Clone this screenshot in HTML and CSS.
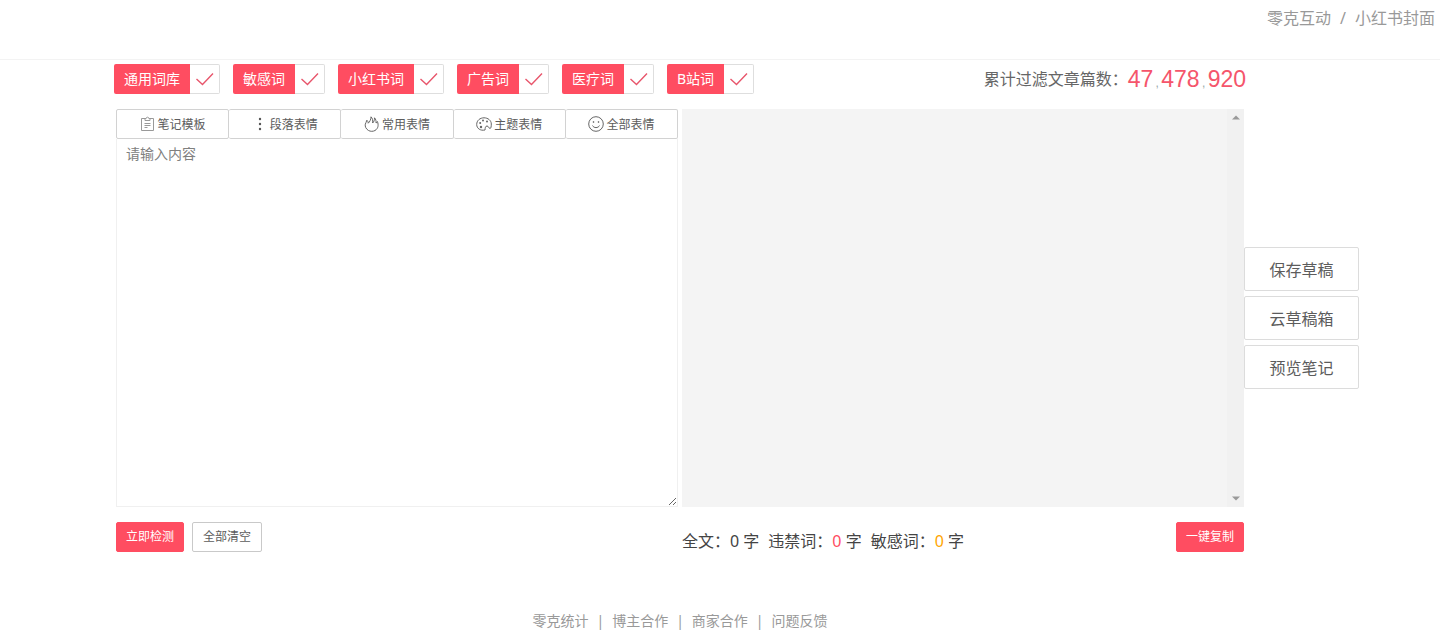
FILE: index.html
```html
<!DOCTYPE html>
<html lang="zh-CN">
<head>
<meta charset="utf-8">
<title>零克互动</title>
<link rel="stylesheet" href="styles.css">
</head>
<body>
<svg class="defs" aria-hidden="true">
  <symbol id="tick" viewBox="0 0 20 16"><path d="M1.5 8 7.5 13.5 18 2.5" fill="none" stroke="currentColor" stroke-width="1.4"/></symbol>
</svg>
<header class="header">
  <nav class="topnav"><a href="#">零克互动</a><span>/</span><a href="#">小红书封面</a></nav>
</header>
<div class="page">
  <main class="content">
    <div class="filters">
      <div class="tags">
        <label class="tag"><span class="tag-name">通用词库</span><span class="tag-box"><input type="checkbox" checked><svg class="tick"><use href="#tick"/></svg></span></label>
        <label class="tag"><span class="tag-name">敏感词</span><span class="tag-box"><input type="checkbox" checked><svg class="tick"><use href="#tick"/></svg></span></label>
        <label class="tag"><span class="tag-name">小红书词</span><span class="tag-box"><input type="checkbox" checked><svg class="tick"><use href="#tick"/></svg></span></label>
        <label class="tag"><span class="tag-name">广告词</span><span class="tag-box"><input type="checkbox" checked><svg class="tick"><use href="#tick"/></svg></span></label>
        <label class="tag"><span class="tag-name">医疗词</span><span class="tag-box"><input type="checkbox" checked><svg class="tick"><use href="#tick"/></svg></span></label>
        <label class="tag"><span class="tag-name">B站词</span><span class="tag-box"><input type="checkbox" checked><svg class="tick"><use href="#tick"/></svg></span></label>
      </div>
      <div class="total"><span>累计过滤文章篇数：</span><span class="odometer"><span>47</span><i>,</i><span>478</span><i>,</i><span>920</span></span></div>
    </div>
    <div class="panes">
      <section class="editor">
        <div class="toolbar">
          <button type="button"><svg class="icon light" viewBox="0 0 16 16"><path d="M5 2.500H1.500v12h12v-12H10M5 4.500v-2h1.200a1.300 1.300 0 0 1 2.600 0H10v2zM4.500 7.500h6M4.500 9.500h6M4.500 11.500h3"/></svg>笔记模板</button>
          <button type="button"><svg class="icon solid" viewBox="0 0 16 16"><circle cx="8" cy="3" r="1.2"/><circle cx="8" cy="8" r="1.2"/><circle cx="8" cy="13" r="1.2"/></svg>段落表情</button>
          <button type="button"><svg class="icon" viewBox="0 0 16 16"><path d="M4.500 14.500C2 13 .8 10.500 1.300 8.200 1.600 6.800 2.600 6 2.800 4.200c1 .8 1.400 1.800 1.400 3C5.800 5.800 7 3.500 7 .8c1.500 1.500 2 3.500 1.600 6.200C10 5.800 10.600 4 10.500 1.800c1.400 1.500 1.700 3.200 1.500 5.200.7-.3 1.100-.8 1.400-1.500 1.400 3.700.8 7-2.400 9-2 1.100-4.500 1.100-6.500 0"/></svg>常用表情</button>
          <button type="button"><svg class="icon" viewBox="0 0 16 16"><path d="M9 14C4.500 15 .7 12.500.7 8.500.7 4.500 4 1.800 8 1.800s7.300 2.700 7.300 6.200c0 2.500-.3 4.500-1.300 4.500-1.300 0-1.300-2.500-3-2.500S9.200 12 9 14z"/><circle class="dot" cx="4.200" cy="7" r="1"/><circle class="dot" cx="7" cy="4.500" r="1"/><circle class="dot" cx="11" cy="5.500" r="1"/><circle class="dot" cx="5" cy="11" r="1.200"/></svg>主题表情</button>
          <button type="button"><svg class="icon" viewBox="0 0 16 16"><circle cx="8" cy="8" r="7.300"/><path d="M4.500 9.500c1.200 2.800 5.800 2.800 7 0"/><circle cx="5.500" cy="6" r=".5"/><circle cx="10.500" cy="6" r=".5"/></svg>全部表情</button>
        </div>
        <textarea class="input" aria-label="内容" placeholder="请输入内容"></textarea>
      </section>
      <section class="result" aria-label="检测结果">
        <div class="scrollbar"><svg viewBox="0 0 8 5"><path d="M0 4.500 4 .5l4 4z"/></svg><svg viewBox="0 0 8 5"><path d="M0 .5h8l-4 4z"/></svg></div>
      </section>
    </div>
    <div class="actions">
      <div class="buttons"><button type="button" class="btn primary">立即检测</button><button type="button" class="btn">全部清空</button></div>
      <div class="summary">
        <p class="stats"><span>全文：0 字</span><span>违禁词：<b class="banned">0</b> 字</span><span>敏感词：<b class="sensitive">0</b> 字</span></p>
        <button type="button" class="btn primary">一键复制</button>
      </div>
    </div>
    <footer class="footer"><a href="#">零克统计</a><span>|</span><a href="#">博主合作</a><span>|</span><a href="#">商家合作</a><span>|</span><a href="#">问题反馈</a></footer>
  </main>
  <aside class="drafts">
    <button type="button">保存草稿</button>
    <button type="button">云草稿箱</button>
    <button type="button">预览笔记</button>
  </aside>
</div>
</body>
</html>
```
FILE: styles.css
```css
* { box-sizing: border-box; }
body { margin: 0; background: #fff; color: #5c5c5c; font: 14px/20px "Noto Sans", "Noto Sans CJK SC", sans-serif; }
button, textarea { font-family: inherit; color: inherit; margin: 0; }
button { cursor: pointer; }
a { color: inherit; text-decoration: none; }
.defs { display: none; }

.header { height: 60px; border-bottom: 1px solid #f3f3f3; padding: 6px 5px; }
.topnav { display: flex; justify-content: flex-end; gap: 9px; color: #999; font-size: 16px; line-height: 24px; }

.page { display: grid; grid-template-columns: 1fr 115px; padding: 4px 81px 0 116px; }
.content { min-width: 0; }

.filters { display: flex; justify-content: space-between; align-items: center; margin: 0 -2px 15px; }
.tags { display: flex; gap: 13px; }
.tag { display: flex; height: 30px; cursor: pointer; }
.tag-name { padding: 0 10px; line-height: 30px; background: #ff4d61; color: #fff; border-radius: 2px 0 0 2px; }
.tag-box { position: relative; width: 30px; }
.tag-box input { appearance: none; display: block; width: 100%; height: 100%; margin: 0; border: 1px solid #dedede; border-left: 0; border-radius: 0 2px 2px 0; cursor: pointer; }
.tick { position: absolute; left: 5px; top: 7px; width: 20px; height: 16px; color: #e8566c; pointer-events: none; visibility: hidden; }
.tag-box input:checked + .tick { visibility: visible; }
.total { display: flex; align-items: center; font-size: 16px; color: #666; white-space: nowrap; }
.odometer { display: flex; align-items: baseline; font: 23px/30px "Liberation Sans", Arial, sans-serif; color: #f5556b; }
.odometer i { width: 8px; text-align: center; font-size: 12px; line-height: 12px; font-style: normal; color: #9aa; }

.panes { display: grid; grid-template-columns: 1fr 1fr; gap: 4px; }
.editor { min-width: 0; }
.toolbar { display: flex; }
.toolbar button { flex: 1; display: flex; align-items: center; justify-content: center; gap: 2px; height: 30px; padding: 0; background: #fff; border: 1px solid #d2d2d2; border-radius: 2px; font-size: 12px; }
.toolbar button + button { border-left: 0; }
.icon { width: 16px; height: 16px; fill: none; stroke: #666; }
.icon.light { stroke: #999; }
.icon.solid { fill: #555; stroke: none; }
.dot { fill: #666; stroke: none; }
.input { display: block; width: 100%; height: 368px; padding: 5px 9px; border: 1px solid #f0f0f0; border-top: 0; outline: 0; resize: both; font-size: 14px; line-height: 20px; }
.input::placeholder { color: #808080; }
.result { display: flex; justify-content: flex-end; background: #f4f4f4; }
.scrollbar { display: flex; flex-direction: column; justify-content: space-between; align-items: center; width: 17px; padding: 6px 0; background: #f1f1f1; }
.scrollbar svg { width: 8px; height: 5px; fill: #999; }

.actions { display: grid; grid-template-columns: 1fr 1fr; gap: 4px; padding-top: 15px; }
.buttons { display: flex; gap: 8px; }
.btn { height: 30px; padding: 0 10px; border: 1px solid #c9c9c9; border-radius: 2px; background: #fff; font-size: 12px; line-height: 28px; }
.btn.primary { padding: 0 9px; border-color: #ff4d61; background: #ff4d61; color: #fff; }
.summary { display: flex; justify-content: space-between; }
.stats { display: flex; gap: 9px; margin: 7px 0 0; font-size: 16px; line-height: 24px; color: #444; }
.stats b { font-weight: normal; }
.banned { color: #ff4d61; }
.sensitive { color: #ffa500; }

.footer { display: flex; justify-content: center; gap: 8px; padding: 58px 0 12px; color: #999; }

.drafts { display: flex; flex-direction: column; gap: 5px; padding-top: 183px; }
.drafts button { height: 44px; background: #fff; border: 1px solid #dcdcdc; border-radius: 2px; font-size: 16px; }
```
